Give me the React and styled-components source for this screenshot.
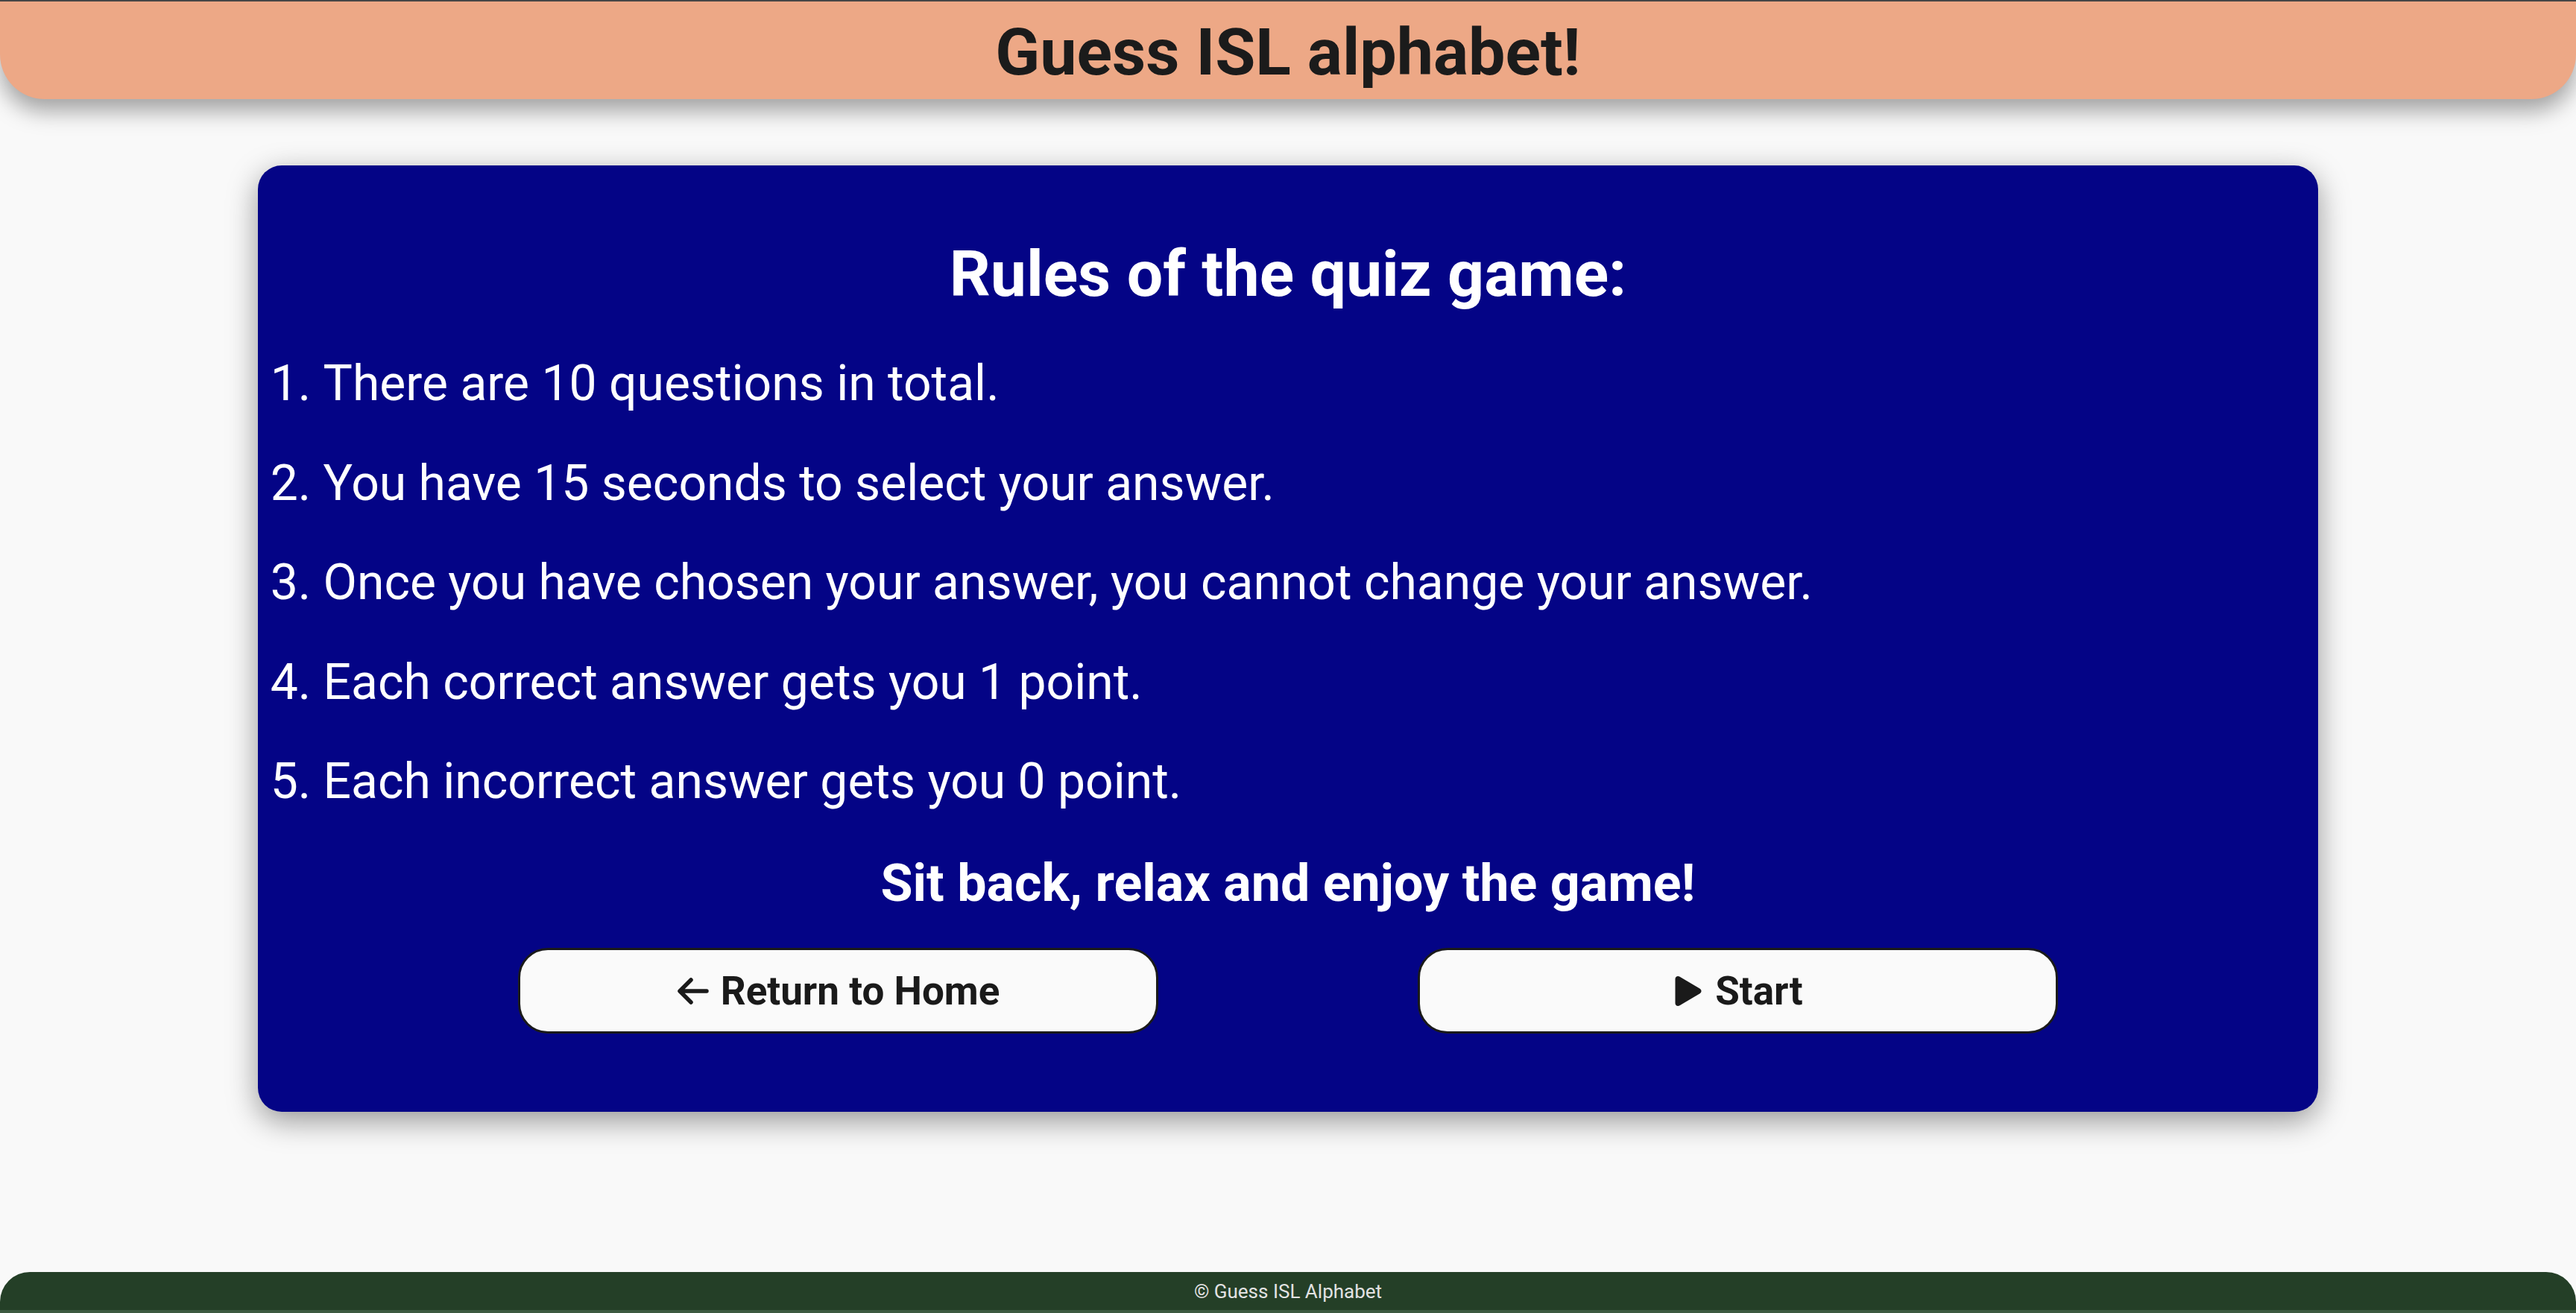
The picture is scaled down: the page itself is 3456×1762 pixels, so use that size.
import React from 'react';
import styled, { createGlobalStyle } from 'styled-components';
import { FaPlay } from 'react-icons/fa';

const GlobalStyle = createGlobalStyle`
  * {
    box-sizing: border-box;
  }
  body {
    margin: 0;
    background: #f9f9f9;
    font-family: Roboto, "Open Sans", sans-serif;
  }
`;

const Page = styled.div`
  min-height: 100vh;
  display: flex;
  flex-direction: column;
`;

const Header = styled.header`
  height: 133px;
  padding-top: 4px;
  display: flex;
  align-items: center;
  justify-content: center;
  background: #eda886;
  border-top: 2px solid #464646;
  border-radius: 0 0 60px 60px;
  box-shadow: 0 16px 30px rgba(0, 0, 0, 0.35);
`;

const Title = styled.h1`
  margin: 0;
  font-size: 88px;
  line-height: 100px;
  font-weight: 700;
  color: #1b1b1b;
`;

const Main = styled.main`
  flex: 1;
  padding-top: 89px;
`;

const Card = styled.section`
  width: 80%;
  margin: 0 auto;
  padding: 96px 0 105px;
  background: #040486;
  border-radius: 32px;
  box-shadow: 0 12px 40px rgba(0, 0, 0, 0.4);
  color: #ffffff;
`;

const Heading = styled.h2`
  margin: 0;
  text-align: center;
  font-size: 86px;
  line-height: 100px;
  font-weight: 700;
`;

const RuleList = styled.ol`
  margin: 59px 0 0;
  padding-left: 88px;
  display: flex;
  flex-direction: column;
  gap: 57.6px;
`;

const Rule = styled.li`
  font-size: 66px;
  line-height: 76px;
`;

const Closing = styled.p`
  margin: 58px 0 0;
  text-align: center;
  font-size: 70px;
  line-height: 80px;
  font-weight: 700;
`;

const ButtonRow = styled.div`
  margin-top: 47px;
  display: flex;
  justify-content: space-evenly;
`;

const Button = styled.button`
  width: 859px;
  height: 115px;
  display: flex;
  align-items: center;
  justify-content: center;
  gap: 16px;
  background: #fafafa;
  border: 3px solid #1a1a1a;
  border-radius: 40px;
  color: #1a1a1a;
  font-family: Roboto, "Open Sans", sans-serif;
  font-size: 53px;
  font-weight: 700;
  cursor: pointer;
`;

const Footer = styled.footer`
  height: 55px;
  display: flex;
  align-items: center;
  justify-content: center;
  background: #243f27;
  border-radius: 40px 40px 0 0;
  border-bottom: 4px solid #3c5a40;
  color: #e2e2e2;
  font-size: 26px;
`;

const BackArrow = () => (
  <svg width="44" height="36" viewBox="0 0 44 36" fill="none">
    <path
      d="M41 18H6M20 3L5 18L20 33"
      stroke="#1a1a1a"
      strokeWidth="5.5"
      strokeLinecap="round"
      strokeLinejoin="round"
    />
  </svg>
);

const rules = [
  'There are 10 questions in total.',
  'You have 15 seconds to select your answer.',
  'Once you have chosen your answer, you cannot change your answer.',
  'Each correct answer gets you 1 point.',
  'Each incorrect answer gets you 0 point.',
];

const App = () => {
  return (
    <>
      <GlobalStyle />
      <Page>
        <Header>
          <Title>Guess ISL alphabet!</Title>
        </Header>
        <Main>
          <Card>
            <Heading>Rules of the quiz game:</Heading>
            <RuleList>
              {rules.map((rule, index) => (
                <Rule key={index}>{rule}</Rule>
              ))}
            </RuleList>
            <Closing>Sit back, relax and enjoy the game!</Closing>
            <ButtonRow>
              <Button>
                <BackArrow />
                Return to Home
              </Button>
              <Button>
                <FaPlay size={40} />
                Start
              </Button>
            </ButtonRow>
          </Card>
        </Main>
        <Footer>© Guess ISL Alphabet</Footer>
      </Page>
    </>
  );
};

export default App;
